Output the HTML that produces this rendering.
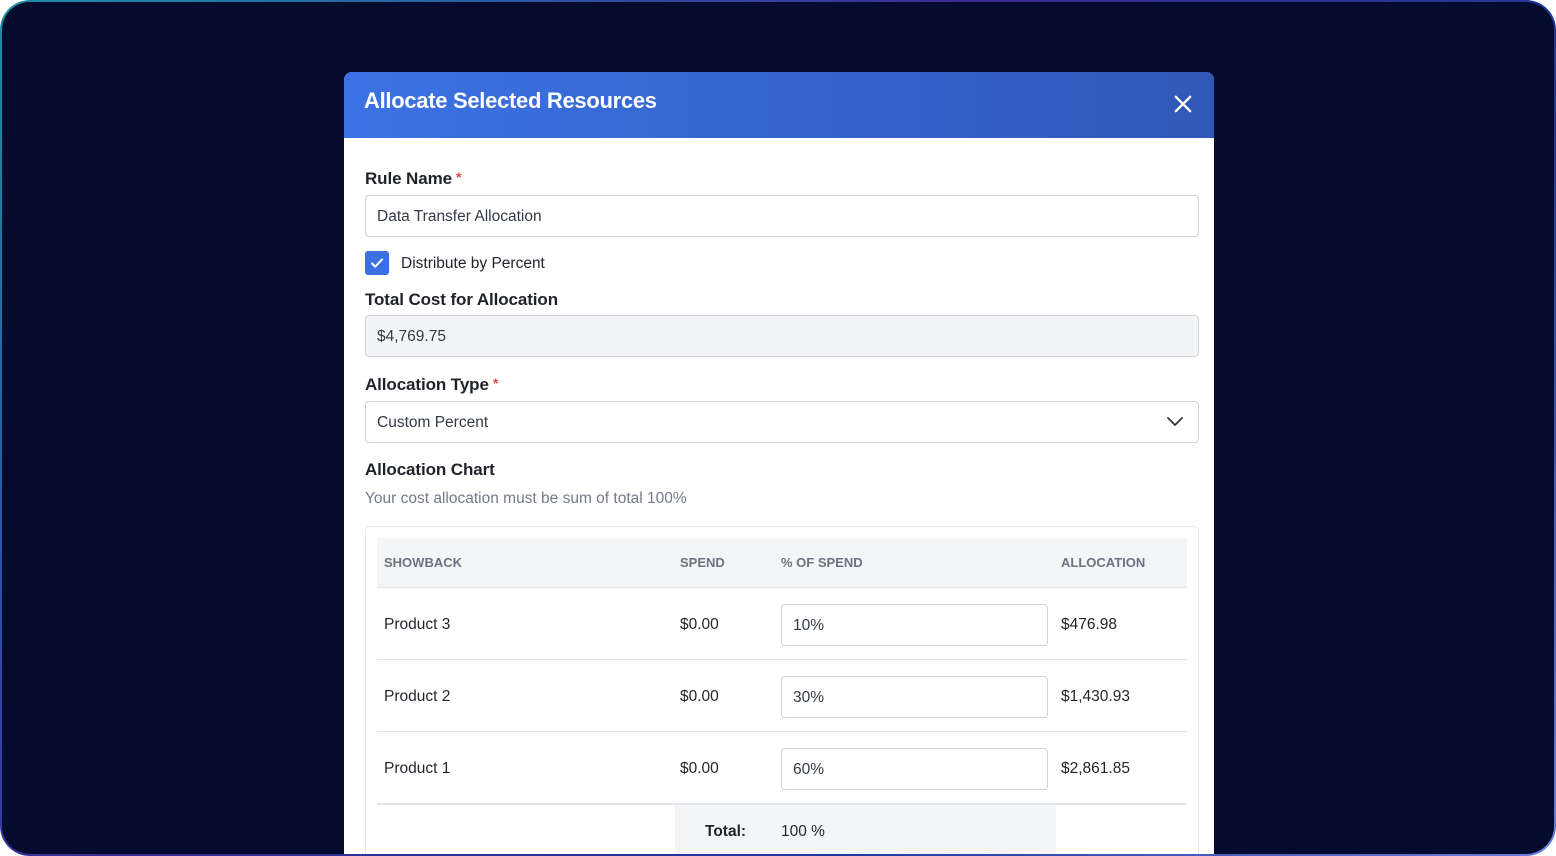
<!DOCTYPE html>
<html><head><meta charset="utf-8"><style>
*{box-sizing:border-box;margin:0;padding:0}
html,body{width:1556px;height:856px;overflow:hidden;background:#fff;font-family:"Liberation Sans",Arial,sans-serif}
.frame{position:absolute;left:0;top:0;width:1556px;height:856px;border-radius:30px;background:linear-gradient(135deg,#1a8fa8 0%,#3a2a9a 40%,#1e3a9a 70%,#6a7ee0 100%);padding:2px}
.inner{width:100%;height:100%;border-radius:28px;background:#040b2d;position:relative;overflow:hidden}
.modal{position:absolute;left:342px;top:70px;width:870px;height:782px;background:#fff;border-radius:8px 8px 0 0;overflow:hidden}
.hdr{height:66px;background:linear-gradient(90deg,#3c72e4,#2f58b8);position:relative}
.hdr h1{position:absolute;left:20px;top:16px;color:#fff;font-size:22px;font-weight:bold;letter-spacing:-0.3px}
.x{position:absolute;right:22px;top:23px;width:18px;height:18px}
.lbl{position:absolute;left:21px;font-size:17px;font-weight:bold;color:#1f2329;letter-spacing:-0.1px}
.req{color:#e04848;font-size:14px;vertical-align:top;margin-left:4px}
.inp{position:absolute;left:21px;width:834px;height:42px;border:1px solid #cfd3d8;border-radius:4px;font-size:15.5px;color:#333a44;padding:12px 11px 0}
.cb{position:absolute;left:21px;top:179px;width:24px;height:24px;background:#3c6fe0;border-radius:3px}
.t{position:absolute;font-size:15.5px;color:#22262c}
.th{position:absolute;top:483px;font-size:13px;font-weight:bold;color:#6b7380}
.pi{position:absolute;left:437px;width:267px;height:42px;border:1px solid #cfd3d8;border-radius:4px;font-size:15.5px;color:#333a44;padding:12px 11px 0}
.line{position:absolute;left:33px;width:810px;height:1px;background:#e3e6ea}
</style></head><body>
<div class="frame"><div class="inner">
<div class="modal">
 <div class="hdr"><h1>Allocate Selected Resources</h1>
 <svg class="x" viewBox="0 0 20 20"><path d="M2 2L18 18M18 2L2 18" stroke="#fff" stroke-width="2.6" stroke-linecap="round"/></svg></div>
 <div class="lbl" style="top:97px">Rule Name<span class="req">*</span></div>
 <div class="inp" style="top:123px">Data Transfer Allocation</div>
 <div class="cb"><svg width="24" height="24" viewBox="0 0 24 24"><path d="M7 12.5l3.2 3.2L17 8.5" stroke="#fff" stroke-width="2" fill="none" stroke-linecap="round" stroke-linejoin="round"/></svg></div>
 <div class="t" style="left:57px;top:183px">Distribute by Percent</div>
 <div class="lbl" style="top:218px">Total Cost for Allocation</div>
 <div class="inp" style="top:243px;background:#f3f4f6">$4,769.75</div>
 <div class="lbl" style="top:303px">Allocation Type<span class="req">*</span></div>
 <div class="inp" style="top:329px">Custom Percent
  <svg style="position:absolute;right:14px;top:14px" width="18" height="12" viewBox="0 0 18 12"><path d="M2 2l7 7 7-7" stroke="#333" stroke-width="1.8" fill="none" stroke-linecap="round" stroke-linejoin="round"/></svg></div>
 <div class="lbl" style="top:388px">Allocation Chart</div>
 <div class="t" style="left:21px;top:418px;color:#737a86;font-size:15.5px">Your cost allocation must be sum of total 100%</div>
 <div style="position:absolute;left:21px;top:454px;width:834px;height:340px;border:1px solid #e5e7eb;border-radius:5px"></div>
 <div style="position:absolute;left:33px;top:466px;width:810px;height:49px;background:#f4f5f7"></div>
 <div class="th" style="left:40px">SHOWBACK</div>
 <div class="th" style="left:336px">SPEND</div>
 <div class="th" style="left:437px">% OF SPEND</div>
 <div class="th" style="left:717px">ALLOCATION</div>
 <div class="line" style="top:515px"></div>
 <div class="t" style="left:40px;top:544px">Product 3</div><div class="t" style="left:336px;top:544px">$0.00</div>
 <div class="pi" style="top:532px">10%</div><div class="t" style="left:717px;top:544px">$476.98</div>
 <div class="line" style="top:587px"></div>
 <div class="t" style="left:40px;top:616px">Product 2</div><div class="t" style="left:336px;top:616px">$0.00</div>
 <div class="pi" style="top:604px">30%</div><div class="t" style="left:717px;top:616px">$1,430.93</div>
 <div class="line" style="top:659px"></div>
 <div class="t" style="left:40px;top:688px">Product 1</div><div class="t" style="left:336px;top:688px">$0.00</div>
 <div class="pi" style="top:676px">60%</div><div class="t" style="left:717px;top:688px">$2,861.85</div>
 <div class="line" style="top:731px;height:2px"></div>
 <div style="position:absolute;left:331px;top:733px;width:381px;height:60px;background:#f4f5f7"></div>
 <div class="t" style="left:361px;top:751px;font-weight:bold">Total:</div>
 <div class="t" style="left:437px;top:751px">100 %</div>
</div>
</div></div>
</body></html>
